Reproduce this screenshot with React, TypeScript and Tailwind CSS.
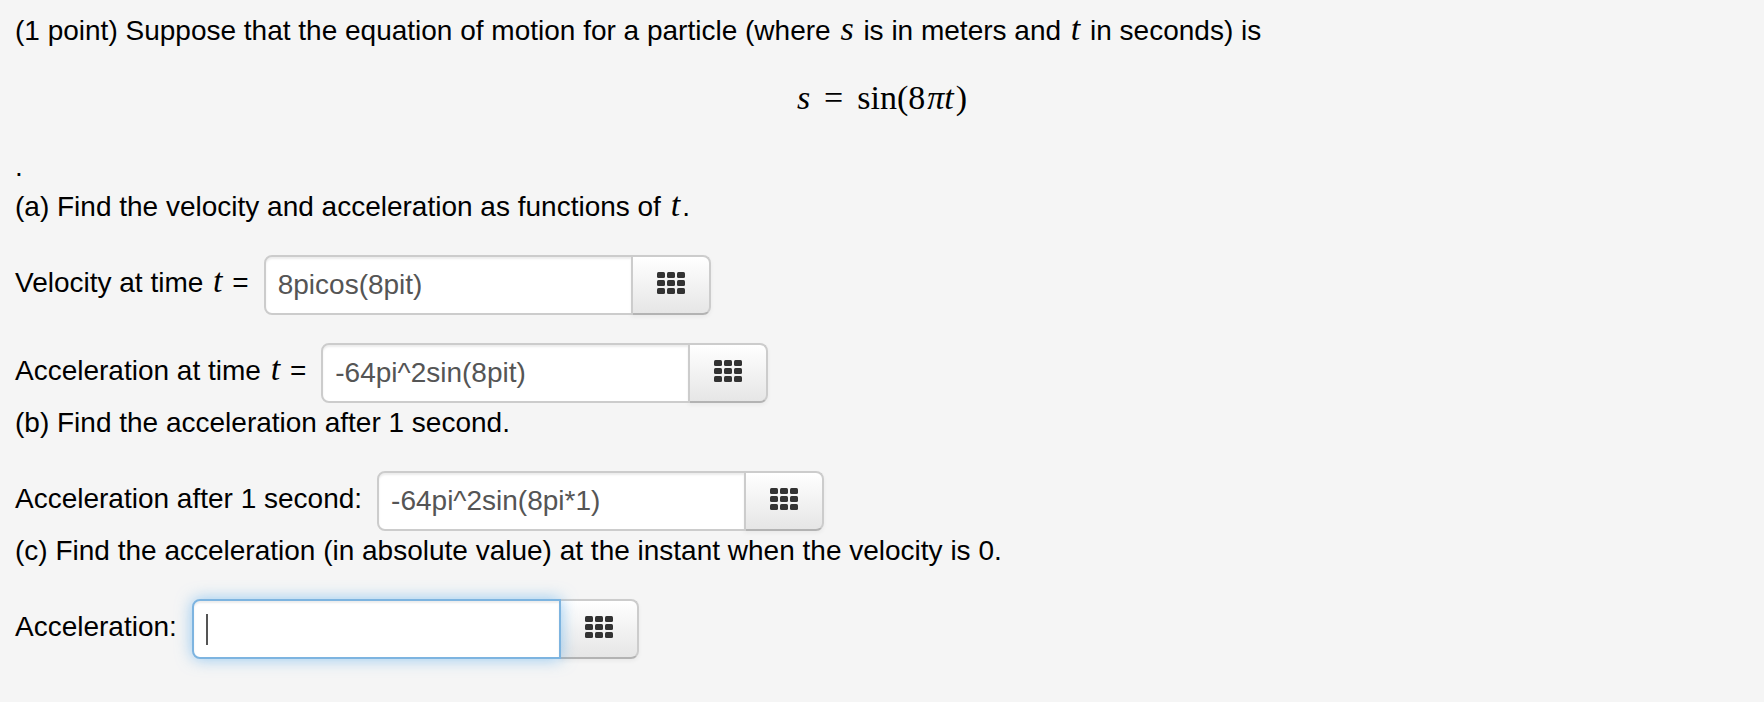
import { useState } from 'react';
import type { ReactNode } from 'react';

function KeypadIcon() {
  return (
    <svg width="28" height="22" viewBox="0 0 28 22" fill="#333333" aria-hidden="true">
      {[0, 8, 16].map((y) =>
        [0, 10, 20].map((x) => (
          <rect key={`${x}-${y}`} x={x} y={y} width="8" height="6" rx="1.5" />
        )),
      )}
    </svg>
  );
}

function Var({ children }: { children: ReactNode }) {
  return (
    <i className="px-0.5 font-['Liberation_Serif',serif] text-[34px] leading-none">
      {children}
    </i>
  );
}

interface AnswerProps {
  id: string;
  label: ReactNode;
  initial?: string;
  autoFocus?: boolean;
}

function Answer({ id, label, initial = '', autoFocus }: AnswerProps) {
  const [value, setValue] = useState(initial);

  return (
    <div className="mt-7 flex h-[60px] items-start gap-[15px]">
      <label htmlFor={id} className="pt-2 whitespace-nowrap">
        {label}
      </label>
      <div className="group relative flex h-full">
        <input
          id={id}
          type="text"
          value={value}
          autoFocus={autoFocus}
          autoComplete="off"
          spellCheck={false}
          onChange={(e) => setValue(e.target.value)}
          className="relative h-full w-[369px] rounded-l-lg border-2 border-[#cccccc] bg-white px-3 text-[#555555] shadow-[inset_0_2px_2px_rgba(0,0,0,0.075)] outline-none focus:z-10 focus:border-[#7db4e0] focus:caret-transparent focus:shadow-[inset_0_2px_2px_rgba(0,0,0,0.075),0_0_16px_rgba(82,168,236,0.6)]"
        />
        {value === '' && (
          <span className="pointer-events-none absolute top-[15px] left-[14px] z-20 hidden h-[31px] w-0.5 bg-[#555555] group-focus-within:block" />
        )}
        <button
          type="button"
          aria-label="Open equation editor"
          className="-ml-0.5 flex h-full w-20 justify-center rounded-r-lg border-2 border-[#cccccc] border-b-[#b3b3b3] bg-linear-to-b from-white to-[#e6e6e6] pt-[15px] shadow-[inset_0_2px_0_rgba(255,255,255,0.2),0_2px_4px_rgba(0,0,0,0.05)]"
        >
          <KeypadIcon />
        </button>
      </div>
    </div>
  );
}

export default function App() {
  return (
    <main className="min-h-screen bg-[#f5f5f5] px-[15px] pt-[11px] pb-8 font-['Liberation_Sans',Arial,sans-serif] text-[28px] leading-10 text-black">
      <p className="h-10">
        (1 point) Suppose that the equation of motion for a particle (where <Var>s</Var> is in
        meters and <Var>t</Var> in seconds) is
      </p>

      <div className="flex h-24 items-baseline justify-center pt-[27px] font-['Liberation_Serif',serif] text-[34px]">
        <i>s</i>
        <span className="px-[14px]">=</span>
        <span>sin(8</span>
        <i className="px-0.5">πt</i>
        <span>)</span>
      </div>

      <p className="h-10">.</p>
      <p className="h-10">
        (a) Find the velocity and acceleration as functions of <Var>t</Var>.
      </p>
      <Answer
        id="velocity"
        label={<>Velocity at time <Var>t</Var> =</>}
        initial="8picos(8pit)"
      />
      <Answer
        id="acceleration"
        label={<>Acceleration at time <Var>t</Var> =</>}
        initial="-64pi^2sin(8pit)"
      />

      <p className="h-10">(b) Find the acceleration after 1 second.</p>
      <Answer
        id="acceleration-one"
        label="Acceleration after 1 second:"
        initial="-64pi^2sin(8pi*1)"
      />

      <p className="h-10">
        (c) Find the acceleration (in absolute value) at the instant when the velocity is 0.
      </p>
      <Answer id="acceleration-rest" label="Acceleration:" autoFocus />
    </main>
  );
}
